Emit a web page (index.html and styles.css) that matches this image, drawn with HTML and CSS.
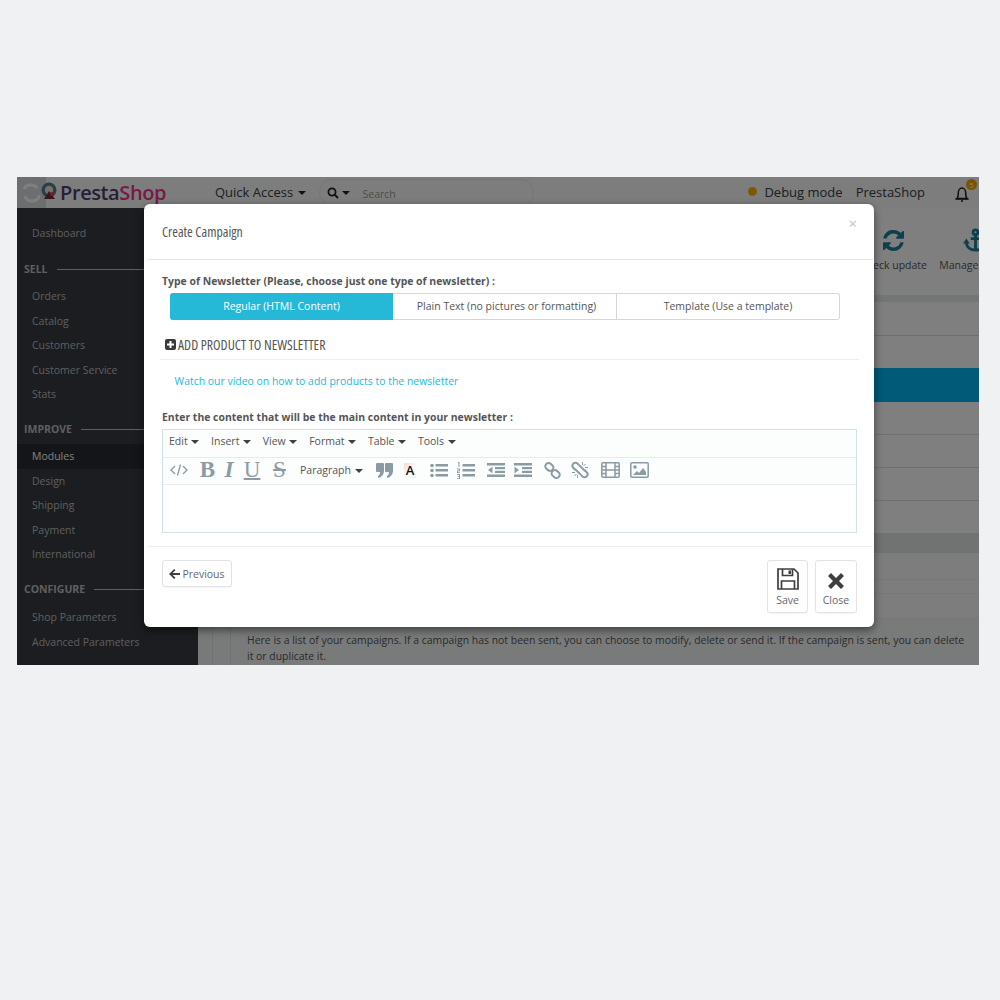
FILE: index.html
```html
<!DOCTYPE html>
<html lang="en">
<head>
<meta charset="utf-8">
<title>Create Campaign</title>
<link rel="stylesheet" href="styles.css">
</head>
<body>
<div class="shot">
  <div class="app">
    <header class="topbar">
      <div class="logo">
        <svg class="logo-mark" width="41" height="31" viewBox="0 0 41 31"><rect width="29" height="31" fill="#dadcde"/><path d="M7 12a7 5.500 0 0 1 13-1M22 18a7 5.500 0 0 1-14 1" fill="none" stroke="#fff" stroke-width="3"/><circle cx="32" cy="13" r="7.500" fill="#4f8090"/><circle cx="32" cy="13" r="4.200" fill="#f0dfd5"/><path d="M27 22l5-8 6 8z" fill="#7a2a44"/><circle cx="35" cy="17" r="2" fill="#e0405a"/></svg>
        <span class="logo-text"><b class="presta">Presta</b><b class="shop">Shop</b></span>
      </div>
      <div class="quick">Quick Access <i class="caret caret-dark"></i></div>
      <div class="search">
        <svg width="12" height="12" viewBox="0 0 12 12"><circle cx="5" cy="5" r="3.600" fill="none" stroke="#222" stroke-width="1.800"/><path d="M7.500 7.500L11 11" stroke="#222" stroke-width="2"/></svg>
        <i class="caret caret-dark"></i>
        <span class="search-text">Search</span>
      </div>
      <div class="top-right">
        <span class="debug"><i class="dot"></i>Debug mode</span>
        <span class="shopname">PrestaShop</span>
        <span class="bell">
          <svg width="17" height="18" viewBox="0 0 17 18"><path d="M3 13.500c1-1 1.300-2 1.300-5.500C4.300 5 6 3 8 3s3.700 2 3.700 5c0 3.500.3 4.500 1.300 5.500z" fill="none" stroke="#1f1f1f" stroke-width="1.500"/><path d="M1.500 14h13M7 16h2" stroke="#1f1f1f" stroke-width="1.500"/></svg>
          <em class="badge">5</em>
        </span>
      </div>
    </header>
    <div class="main">
      <nav class="side">
        <a class="item first">Dashboard</a>
        <div class="group"><span>SELL</span><i></i></div>
        <a class="item">Orders</a>
        <a class="item">Catalog</a>
        <a class="item">Customers</a>
        <a class="item">Customer Service</a>
        <a class="item">Stats</a>
        <div class="group g2"><span>IMPROVE</span><i></i></div>
        <a class="item active">Modules</a>
        <a class="item">Design</a>
        <a class="item">Shipping</a>
        <a class="item">Payment</a>
        <a class="item">International</a>
        <div class="group g3"><span>CONFIGURE</span><i></i></div>
        <a class="item">Shop Parameters</a>
        <a class="item">Advanced Parameters</a>
      </nav>
      <div class="content">
        <div class="tools">
          <div class="tool tool-a">
            <svg width="21" height="21" viewBox="0 0 1536 1536"><path fill="#1b7f9e" d="M1511 928q0 5-1 7-64 268-268 434.500T764 1536q-146 0-282.500-55T238 1324l-129 129q-19 19-45 19t-45-19-19-45V960q0-26 19-45t45-19h448q26 0 45 19t19 45-19 45L420 1142q71 66 161 102t187 36q134 0 250-65t186-179q11-17 53-117 8-23 30-23h192q13 0 22.500 9.500t9.500 22.500zM1536 128v448q0 26-19 45t-45 19h-448q-26 0-45-19t-19-45 19-45l138-138q-148-137-349-137-134 0-250 65T332 480q-11 17-53 117-8 23-30 23H50q-13 0-22.500-9.500T18 588v-7q65-268 270-434.500T768 0q146 0 284 55.500T1297 212l130-129q19-19 45-19t45 19 19 45z"/></svg>
            <span>Check update</span>
          </div>
          <div class="tool tool-b">
            <svg width="25" height="25" viewBox="0 0 26 26"><g fill="none" stroke="#1b7f9e" stroke-width="3"><circle cx="13" cy="4.500" r="2.500"/><path d="M13 7v16M8 11h10M3.500 14c0 6 4 9 9.500 9s9.500-3 9.500-9"/></g><path d="M0 16l3.500-5 3.500 5zM19 16l3.500-5 3.500 5z" fill="#1b7f9e"/></svg>
            <span>Manage hooks</span>
          </div>
        </div>
        <div class="rule-thick"></div>
        <div class="row r1"></div>
        <div class="row r2"></div>
        <div class="banner"></div>
        <div class="row"></div>
        <div class="row"></div>
        <div class="row"></div>
        <div class="row r6"></div>
        <div class="band"></div>
        <div class="row faint r7"></div>
        <div class="row faint r8"></div>
        <div class="row faint r9"></div>
        <div class="panel">
          <div class="panel-inner">
            <p class="note">Here is a list of your campaigns. If a campaign has not been sent, you can choose to modify, delete or send it. If the campaign is sent, you can delete it or duplicate it.</p>
          </div>
        </div>
      </div>
    </div>
  </div>
  <div class="overlay"></div>
  <section class="modal">
    <div class="modal-head">
      <h2 class="title">Create Campaign</h2>
      <span class="x">×</span>
    </div>
    <div class="modal-body">
      <label class="lbl">Type of Newsletter (Please, choose just one type of newsletter) :</label>
      <div class="tabs">
        <span class="tab on">Regular (HTML Content)</span>
        <span class="tab plain">Plain Text (no pictures or formatting)</span>
        <span class="tab last">Template (Use a template)</span>
      </div>
      <div class="add">
        <svg width="11" height="11" viewBox="0 0 11 11"><rect width="11" height="11" rx="2" fill="#3a3a3a"/><path d="M5.500 2v7M2 5.500h7" stroke="#fff" stroke-width="2"/></svg>
        <span class="add-text">ADD PRODUCT TO NEWSLETTER</span>
      </div>
      <a class="video">Watch our video on how to add products to the newsletter</a>
      <label class="lbl lbl2">Enter the content that will be the main content in your newsletter :</label>
      <div class="editor">
        <div class="menubar">
          <span>Edit <i class="caret"></i></span>
          <span>Insert <i class="caret"></i></span>
          <span>View <i class="caret"></i></span>
          <span>Format <i class="caret"></i></span>
          <span>Table <i class="caret"></i></span>
          <span>Tools <i class="caret"></i></span>
        </div>
        <div class="toolbar">
          <svg class="ti-code" width="18" height="14" viewBox="0 0 18 14"><path d="M5 3L1 7l4 4M13 3l4 4-4 4M10.500 1.500L7.500 12.500" fill="none" stroke="#8b9ba3" stroke-width="1.300"/></svg>
          <span class="fb">B</span>
          <span class="fi">I</span>
          <span class="fu">U</span>
          <span class="fs">S</span>
          <span class="para">Paragraph <i class="caret"></i></span>
          <svg class="ti-quote" width="17" height="15" viewBox="0 0 17 15"><path fill="#8b9ba3" d="M1 0h6a1 1 0 0 1 1 1v6.500C8 11 6 14 2.500 15l-.8-1.800C3.300 12.300 4 11 4 9H1a1 1 0 0 1-1-1V1a1 1 0 0 1 1-1zM10 0h6a1 1 0 0 1 1 1v6.500c0 3.500-2 6.500-5.500 7.500l-.8-1.800c1.600-.9 2.300-2.200 2.300-4.200h-3a1 1 0 0 1-1-1V1a1 1 0 0 1 1-1z"/></svg>
          <span class="fa">A</span>
          <svg class="ti-ul" width="18" height="15" viewBox="0 0 18 15"><g fill="#8b9ba3"><circle cx="2" cy="2.500" r="1.800"/><circle cx="2" cy="7.500" r="1.800"/><circle cx="2" cy="12.500" r="1.800"/><rect x="5.500" y="1" width="12.500" height="2.500"/><rect x="5.500" y="6" width="12.500" height="2.500"/><rect x="5.500" y="11" width="12.500" height="2.500"/></g></svg>
          <svg class="ti-ol" width="18" height="17" viewBox="0 0 18 17"><g fill="#8b9ba3"><rect x="5.500" y="2" width="12.500" height="2.500"/><rect x="5.500" y="7" width="12.500" height="2.500"/><rect x="5.500" y="12" width="12.500" height="2.500"/><path d="M1 0h1.500v5H1.500V1H1zM0 6.500h3v2.800H1v1h2v.8H0V8.500h2v-1H0zM0 12h3v5H0v-.8h2v-1.200H.8v-.8H2v-1.200H0z"/></g></svg>
          <svg class="ti-out" width="18" height="14" viewBox="0 0 18 14"><g fill="#8b9ba3"><rect width="18" height="2.500"/><rect y="11.500" width="18" height="2.500"/><rect x="8" y="4" width="10" height="2.200"/><rect x="8" y="7.800" width="10" height="2.200"/><path d="M1 7l4.500-3.200v6.400z"/></g></svg>
          <svg class="ti-in" width="18" height="14" viewBox="0 0 18 14"><g fill="#8b9ba3"><rect width="18" height="2.500"/><rect y="11.500" width="18" height="2.500"/><rect x="8" y="4" width="10" height="2.200"/><rect x="8" y="7.800" width="10" height="2.200"/><path d="M5 7L.5 3.800v6.400z"/></g></svg>
          <svg class="ti-link" width="17" height="17" viewBox="0 0 17 17"><g fill="none" stroke="#8b9ba3" stroke-width="2"><rect x="1" y="1.500" width="8.500" height="6.500" rx="3.200" transform="rotate(40 5 5)"/><rect x="7.500" y="9" width="8.500" height="6.500" rx="3.200" transform="rotate(40 12 12)"/></g></svg>
          <svg class="ti-unlink" width="18" height="18" viewBox="0 0 18 18"><g fill="none" stroke="#8b9ba3" stroke-width="2"><path d="M8 4L6.500 2.500C5 1.300 3 1.500 2 3s-.7 3 .5 4L4.500 9"/><path d="M10 14l1.500 1.500c1.500 1.200 3.500 1 4.500-.5s.7-3-.5-4L13.500 9"/><path d="M8 4l6 6M4 8l6 6" stroke-width="1.800"/></g><path d="M11.500 1v3M14.500 3l-2 2M17 6.500h-3M1 11.500h3M3.500 15l2-2M6.500 17v-3" stroke="#8b9ba3" stroke-width="1"/></svg>
          <svg class="ti-film" width="19" height="16" viewBox="0 0 19 16"><g fill="none" stroke="#8b9ba3" stroke-width="1.500"><rect x=".8" y=".8" width="17.400" height="14.400" rx="1"/><path d="M5 1v14M14 1v14M1 4.500h4M1 8h4M1 11.500h4M14 4.500h4M14 8h4M14 11.500h4M5 8h9"/></g></svg>
          <svg class="ti-img" width="19" height="16" viewBox="0 0 19 16"><rect x=".8" y=".8" width="17.400" height="14.400" rx="1" fill="none" stroke="#8b9ba3" stroke-width="1.500"/><circle cx="5" cy="5" r="1.800" fill="#8b9ba3"/><path d="M3 13l4-4 2 2 4-5 3 4v3z" fill="#8b9ba3"/></svg>
        </div>
        <div class="edit-area"></div>
      </div>
    </div>
    <div class="modal-foot">
      <button class="btn prev">
        <svg width="11" height="10" viewBox="0 0 11 10"><path d="M5.200 0l1.300 1.300L3.600 4H11v2H3.600l2.900 2.700L5.200 10 0 5z" fill="#3f3f3f"/></svg>
        Previous
      </button>
      <div class="foot-right">
        <button class="btn big save">
          <svg width="22" height="22" viewBox="0 0 22 22"><path d="M1 1h16l4 4v16H1z" fill="none" stroke="#3f3f3f" stroke-width="1.700"/><path d="M5.500 1v6.500h10V1M4.500 21v-8h13v8" fill="none" stroke="#3f3f3f" stroke-width="1.700"/><rect x="11.500" y="2.500" width="2.500" height="3.500" fill="#3f3f3f"/></svg>
          <span>Save</span>
        </button>
        <button class="btn big">
          <svg width="18" height="18" viewBox="0 0 18 18"><path d="M1 4l3-3 5 5 5-5 3 3-5 5 5 5-3 3-5-5-5 5-3-3 5-5z" fill="#3f3f3f"/></svg>
          <span>Close</span>
        </button>
      </div>
    </div>
  </section>
</div>
</body>
</html>
```

FILE: styles.css
```css
* { box-sizing: border-box; }
html, body { margin: 0; padding: 0; }
body { background: #eff1f3; font-family: "Open Sans", sans-serif; height: 1000px; overflow: hidden; }
.shot { position: relative; width: 962px; height: 488px; margin: 177px 0 0 17px; overflow: hidden; }
.app { width: 100%; height: 100%; display: flex; flex-direction: column; background: #f5f6f7; }
.topbar { height: 31px; flex: none; display: flex; align-items: center; background: #fafafa; color: #363a41; font-size: 13px; }
.logo { width: 198px; display: flex; align-items: center; flex: none; align-self: stretch; }
.logo-mark { flex: none; margin-right: 2px; }
.logo-text { font-size: 20px; letter-spacing: -.4px; font-family: "Open Sans", sans-serif; }
.logo-text b { font-weight: 600; }
.presta { color: #4c3f72; }
.shop { color: #ee3590; }
.quick { color: #363a41; white-space: nowrap; padding-bottom: 2px; }
.caret { display: inline-block; width: 0; height: 0; border: 4px solid transparent; border-top-color: #3f3f3f; border-bottom: 0; vertical-align: middle; margin-left: 1px; }
.caret-dark { border-top-color: #222; }
.search { margin-left: 13px; width: 215px; height: 27px; border: 1px solid #ececec; border-radius: 14px; display: flex; align-items: center; padding-left: 7px; gap: 2px; }
.search-text { margin: 2px 0 0 11px; font-size: 10.500px; color: #9a9a9a; }
.top-right { margin-left: auto; display: flex; align-items: center; }
.debug { display: flex; align-items: center; color: #363a41; padding-bottom: 2px; }
.dot { width: 9px; height: 9px; border-radius: 50%; background: #f7b500; margin-right: 7px; }
.shopname { margin-left: 13px; padding-bottom: 2px; }
.bell { position: relative; margin: 3px 8px 0 29px; display: flex; }
.badge { position: absolute; right: -6px; top: -6px; width: 11px; height: 11px; border-radius: 50%; background: #f7a500; color: #fff; font: normal 8px/11px "Open Sans", sans-serif; text-align: center; }
.main { flex: 1; display: flex; min-height: 0; }
.side { width: 181px; flex: none; background: #363a41; color: #bebebe; font-size: 10.500px; padding-top: 13px; display: flex; flex-direction: column; }
.item { display: block; height: 24.400px; flex: none; line-height: 24px; padding-left: 15px; color: #bebebe; white-space: nowrap; }
.item.first { margin-bottom: 12px; }
.item.active { background: #282b30; color: #fff; }
.group { height: 24px; flex: none; display: flex; align-items: center; padding-left: 7px; margin-bottom: 3px; font-size: 10.500px; font-weight: 700; color: #bebebe; gap: 9px; }
.group i { flex: 1; height: 1px; background: #bebebe; }
.g2 { margin-top: 11px; }
.g3 { margin-top: 11px; margin-bottom: 4px; }
.content { flex: 1; min-width: 0; background: #f1f2f3; display: flex; flex-direction: column; }
.tools { height: 87px; flex: none; background: #fff; display: flex; justify-content: flex-end; overflow: hidden; font-size: 10.500px; color: #555; }
.tool { display: flex; flex-direction: column; align-items: center; white-space: nowrap; flex: none; }
.tool-a { width: 76px; margin-right: 7.500px; padding-top: 22px; gap: 7px; }
.tool-b { width: 72px; margin-right: -32px; padding-top: 20px; gap: 5px; }
.rule-thick { height: 7px; flex: none; background: #e9eaeb; }
.row { height: 33px; flex: none; background: #fff; border-bottom: 1px solid #dcdedf; }
.r1 { height: 34px; }
.r2 { height: 32px; border-bottom: 0; }
.banner { height: 34px; flex: none; background: #00b4f0; }
.r6 { height: 32px; border-bottom: 0; }
.band { height: 20px; flex: none; background: #e2e4e5; }
.faint { border-bottom-color: #f0f1f2; background: #fbfbfb; }
.r7 { height: 27px; }
.r8 { height: 14px; }
.r9 { height: 25px; }
.panel { flex: 1; margin-left: 14px; padding-left: 17px; border-left: 1px solid #e4e5e6; background: #f3f4f5; }
.panel-inner { height: 100%; border-left: 1px solid #e4e5e6; padding: 13px 10px 0 16px; }
.note { margin: 0; font-size: 10.450px; line-height: 16px; color: #555; }
.overlay { position: absolute; inset: 0; background: rgba(0, 0, 0, .5); }
.modal { position: absolute; left: 127px; top: 27px; width: 730px; height: 423px; background: #fff; border-radius: 6px; box-shadow: 0 3px 9px rgba(0, 0, 0, .5); display: flex; flex-direction: column; color: #555; }
.modal-head { height: 56px; margin: 0 1px 0 4px; border-bottom: 1px solid #e5e5e5; flex: none; padding-left: 14px; position: relative; }
.title { margin: 0; padding-top: 19px; font: 400 13.800px/17px "Open Sans", sans-serif; font-stretch: 75%; color: #555; }
.x { position: absolute; right: 16px; top: 9px; font-size: 15px; line-height: 20px; color: #c4c4c4; }
.modal-body { flex: 1; padding: 14px 18px 0; }
.lbl { display: block; font-size: 10.450px; font-weight: 700; line-height: 15px; color: #555; white-space: nowrap; }
.tabs { display: flex; width: 670px; height: 27px; margin: 4px 0 0 8px; border-radius: 3px; }
.tab { flex: none; width: 223px; padding-bottom: 1px; display: flex; align-items: center; justify-content: center; font-size: 10.500px; color: #555; background: #fff; border: 1px solid #d6d6d6; border-left: 0; white-space: nowrap; }
.tab.on { background: #25b9d7; border-color: #25b9d7; color: #fff; border-radius: 3px 0 0 3px; padding-left: 1px; }
.tab.plain { width: 224px; padding-left: 4px; }
.tab.last { border-radius: 0 3px 3px 0; }
.add { margin: 13px 0 0 -2px; height: 27px; width: 699px; padding: 4px 0 7px 5px; display: flex; align-items: center; gap: 2px; border-bottom: 1px solid #eee; color: #555; }
.add-text { font: 400 13.800px/14px "Open Sans", sans-serif; font-stretch: 75%; }
.video { display: block; margin: 14px 0 0 12.500px; font-size: 10.450px; line-height: 15px; color: #25b9d7; }
.lbl2 { margin-top: 21px; }
.editor { width: 695px; height: 104px; margin-top: 4px; border: 1px solid #d3e0e5; display: flex; flex-direction: column; }
.menubar { height: 28px; flex: none; display: flex; align-items: center; padding: 0 0 5px 6px; gap: 11.700px; font-size: 10.500px; color: #555; background: #fcfdfd; border-bottom: 1px solid #e5eced; white-space: nowrap; }
.toolbar { height: 27px; flex: none; display: flex; align-items: center; padding: 0 0 2px 7px; background: #fcfdfd; border-bottom: 1px solid #e5eced; }
.fb, .fi, .fu, .fs { font-family: "Liberation Serif", serif; color: #8b9ba3; font-size: 23px; line-height: 24px; display: flex; justify-content: center; flex: none; }
.fb { font-weight: 700; margin-left: 12px; width: 15px; }
.fi { font-style: italic; font-weight: 700; margin-left: 9px; width: 10px; }
.fu { text-decoration: underline; text-decoration-thickness: 2px; margin-left: 10px; width: 16px; }
.fs { text-decoration: line-through; text-decoration-thickness: 2px; margin-left: 11px; width: 17px; }
.para { font-size: 10.500px; color: #555; margin-left: 12px; width: 64px; white-space: nowrap; flex: none; }
.ti-quote { margin-left: 12px; }
.fa { font-size: 13px; font-weight: 600; color: #111; margin-left: 11px; width: 12px; text-align: center; line-height: 15px; background: linear-gradient(135deg, #f6d6d0, #fff 55%, #e3f3ee); }
.toolbar svg { flex: none; }
.ti-ul { margin-left: 14px; }
.ti-ol { margin-left: 9px; }
.ti-out { margin-left: 12px; }
.ti-in { margin-left: 9px; }
.ti-link { margin-left: 12px; }
.ti-unlink { margin-left: 10px; }
.ti-film { margin-left: 12px; }
.ti-img { margin-left: 10px; }
.edit-area { flex: 1; background: #fff; }
.modal-foot { flex: none; height: 81px; margin: 0 1px 0 4px; border-top: 1px solid #eee; padding: 13px 16px 0 14px; display: flex; justify-content: space-between; align-items: flex-start; }
.btn { background: #fff; border: 1px solid #e3e3e3; border-radius: 3px; font-family: "Open Sans", sans-serif; font-size: 10.500px; color: #666; padding: 0; box-shadow: 0 1px 1px rgba(0, 0, 0, .04); }
.prev { width: 70px; height: 27px; display: flex; align-items: center; justify-content: center; gap: 2px; }
.foot-right { display: flex; gap: 7px; }
.big { width: 42px; height: 53px; display: flex; flex-direction: column; align-items: center; justify-content: flex-end; gap: 3px; padding-bottom: 5px; }
.save { width: 41px; }
```
